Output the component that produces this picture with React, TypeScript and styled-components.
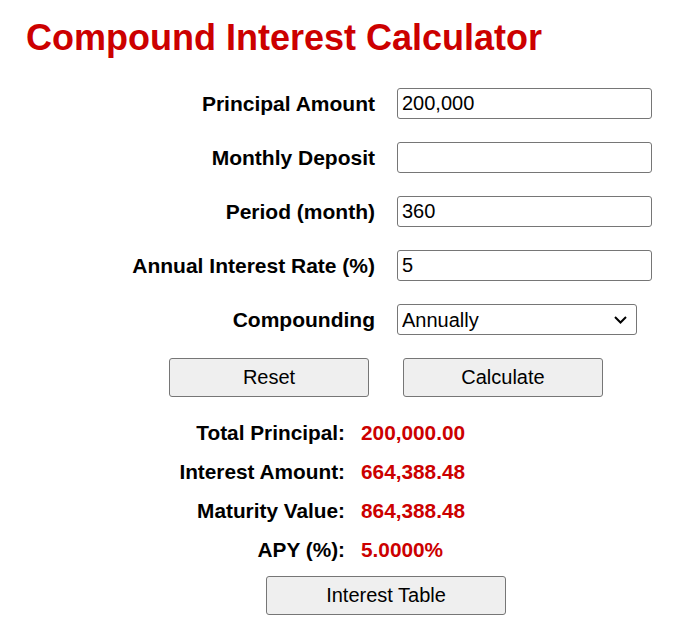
import React from 'react';
import styled, { createGlobalStyle } from 'styled-components';

const GlobalStyle = createGlobalStyle`
    body {
        margin: 0;
        background: #fff;
        font-family: Arial, 'Liberation Sans', sans-serif;
        color: #000;
    }
`;

const Page = styled.div`
    padding: 17px 0 20px 24px;
`;

const Title = styled.h1`
    margin: 0 0 0 2px;
    font-size: 36px;
    font-weight: bold;
    color: #cc0000;
    line-height: normal;
`;

const Form = styled.div`
    display: grid;
    grid-template-columns: 351px 255px;
    column-gap: 22px;
    row-gap: 23px;
    margin-top: 29px;
    align-items: center;
`;

const Label = styled.label`
    font-size: 21px;
    font-weight: bold;
    text-align: right;
`;

const Input = styled.input`
    box-sizing: border-box;
    width: 255px;
    height: 31px;
    padding: 0 4px;
    border: 1px solid #767676;
    border-radius: 3px;
    font-family: inherit;
    font-size: 20px;
    color: #000;
    outline: 0;
`;

const SelectBox = styled.div`
    position: relative;
    width: 240px;
`;

const Select = styled.select`
    appearance: none;
    box-sizing: border-box;
    width: 240px;
    height: 31px;
    padding: 0 4px;
    border: 1px solid #767676;
    border-radius: 3px;
    background: #fff;
    font-family: inherit;
    font-size: 20px;
    color: #000;
    outline: 0;
`;

const Chevron = styled.svg`
    position: absolute;
    right: 10px;
    top: 12px;
    pointer-events: none;
`;

const ButtonRow = styled.div`
    display: flex;
    gap: 34px;
    margin: 23px 0 0 145px;
`;

const Button = styled.button<{ $width?: number }>`
    box-sizing: border-box;
    width: ${(p) => p.$width ?? 200}px;
    height: 39px;
    background: #efefef;
    border: 1px solid #767676;
    border-radius: 3px;
    font-family: inherit;
    font-size: 20px;
    color: #000;
    padding: 0;
`;

const Results = styled.div`
    display: grid;
    grid-template-columns: 321px auto;
    grid-auto-rows: 39px;
    column-gap: 16px;
    align-items: center;
    margin-top: 16px;
`;

const ResultLabel = styled.div`
    font-size: 20.8px;
    font-weight: bold;
    text-align: right;
`;

const ResultValue = styled.div`
    font-size: 20.8px;
    font-weight: bold;
    color: #cc0000;
`;

const TableRow = styled.div`
    margin: 7px 0 0 242px;
`;

const fields = [
    { label: 'Principal Amount', value: '200,000' },
    { label: 'Monthly Deposit', value: '' },
    { label: 'Period (month)', value: '360' },
    { label: 'Annual Interest Rate (%)', value: '5' },
];

const results = [
    ['Total Principal:', '200,000.00'],
    ['Interest Amount:', '664,388.48'],
    ['Maturity Value:', '864,388.48'],
    ['APY (%):', '5.0000%'],
];

export default function App() {
    return (
        <Page>
            <GlobalStyle />
            <Title>Compound Interest Calculator</Title>
            <Form>
                {fields.map((f) => (
                    <React.Fragment key={f.label}>
                        <Label>{f.label}</Label>
                        <Input defaultValue={f.value} />
                    </React.Fragment>
                ))}
                <Label>Compounding</Label>
                <SelectBox>
                    <Select defaultValue="Annually">
                        <option>Annually</option>
                        <option>Semiannually</option>
                        <option>Quarterly</option>
                        <option>Monthly</option>
                        <option>Daily</option>
                    </Select>
                    <Chevron width="13" height="8" viewBox="0 0 13 8">
                        <path d="M1 1l5.5 5.5L12 1" fill="none" stroke="#000" strokeWidth="2" />
                    </Chevron>
                </SelectBox>
            </Form>
            <ButtonRow>
                <Button>Reset</Button>
                <Button>Calculate</Button>
            </ButtonRow>
            <Results>
                {results.map(([l, v]) => (
                    <React.Fragment key={l}>
                        <ResultLabel>{l}</ResultLabel>
                        <ResultValue>{v}</ResultValue>
                    </React.Fragment>
                ))}
            </Results>
            <TableRow>
                <Button $width={240}>Interest Table</Button>
            </TableRow>
        </Page>
    );
}
